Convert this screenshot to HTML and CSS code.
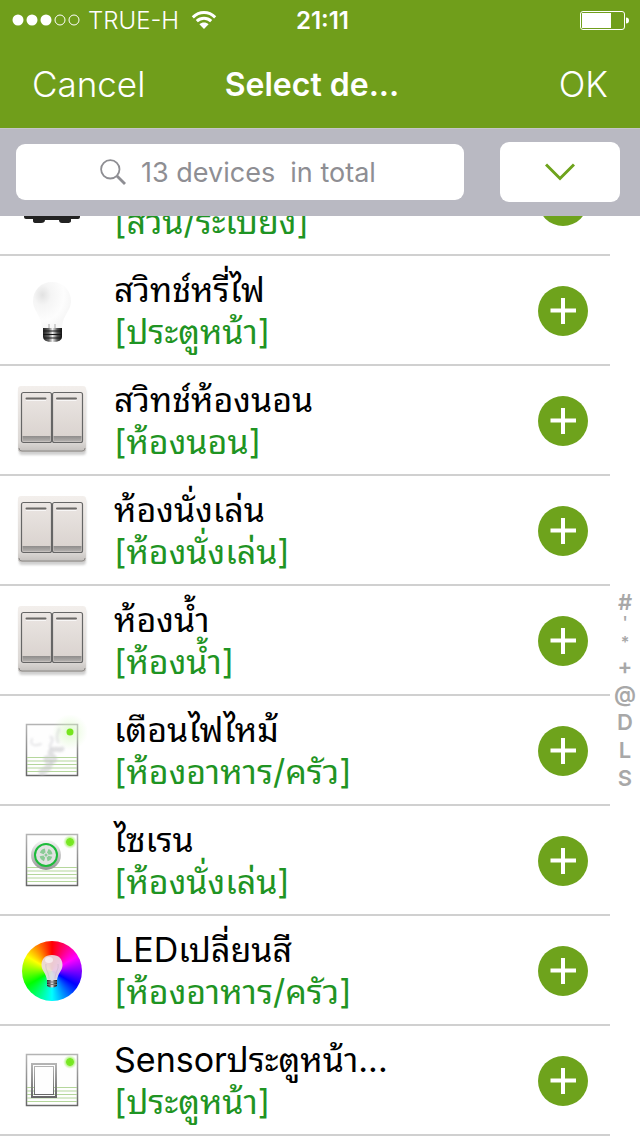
FILE: index.html
```
<!DOCTYPE html>
<html lang="th">
<head>
<meta charset="utf-8">
<meta name="viewport" content="width=device-width">
<title>Select devices</title>
<link rel="stylesheet" href="styles.css">
</head>
<body>
<svg class="defs" aria-hidden="true">
  <defs>
    <linearGradient id="plate" x1="0" y1="0" x2="0" y2="1"><stop offset="0" stop-color="#f3efec"/><stop offset=".85" stop-color="#dcd8d5"/><stop offset="1" stop-color="#c2bfbc"/></linearGradient>
    <linearGradient id="rocker" x1="0" y1="0" x2="0" y2="1"><stop offset="0" stop-color="#ebe6e3"/><stop offset="1" stop-color="#d8d1cd"/></linearGradient>
    <linearGradient id="lip" x1="0" y1="0" x2="0" y2="1"><stop offset="0" stop-color="#8e8c8b"/><stop offset="1" stop-color="#b3b0ae"/></linearGradient>
    <linearGradient id="frame" x1="0" y1="0" x2="0" y2="1"><stop offset="0" stop-color="#b4b4b4"/><stop offset="1" stop-color="#686868"/></linearGradient>
    <linearGradient id="metal" x1="0" y1="0" x2="1" y2="0"><stop offset="0" stop-color="#222"/><stop offset=".3" stop-color="#666"/><stop offset=".5" stop-color="#eee"/><stop offset=".75" stop-color="#555"/><stop offset="1" stop-color="#111"/></linearGradient>
    <linearGradient id="dome" x1="0" y1="0" x2="0" y2="1"><stop offset="0" stop-color="#f6f6f6"/><stop offset="1" stop-color="#969696"/></linearGradient>
    <radialGradient id="glass" cx=".25" cy=".28" r=".75"><stop offset="0" stop-color="#e2e2e2"/><stop offset=".3" stop-color="#f5f5f5"/><stop offset=".75" stop-color="#fdfdfd"/><stop offset="1" stop-color="#f7f7f7"/></radialGradient>
    <radialGradient id="glow"><stop offset="0" stop-color="#74e61c"/><stop offset=".5" stop-color="#7ae827"/><stop offset=".62" stop-color="#a5f06c" stop-opacity=".7"/><stop offset="1" stop-color="#c6f5a0" stop-opacity="0"/></radialGradient>
    <radialGradient id="haze"><stop offset="0" stop-color="#c9f5ae" stop-opacity=".6"/><stop offset="1" stop-color="#d8f8c4" stop-opacity="0"/></radialGradient>
    <filter id="soft"><feGaussianBlur stdDeviation="1.2"/></filter>
    <symbol id="plus" viewBox="0 0 50 50"><circle cx="25" cy="25" r="25" fill="#6ea31c"/><path d="M12.500 24.500H38M25 12V38" stroke="#fff" stroke-width="4"/></symbol>
    <symbol id="switch" viewBox="0 0 72 72">
      <rect x="3" y="4" width="67" height="66" rx="3" fill="#aaa" opacity=".55" filter="url(#soft)"/>
      <rect x="2" y="1" width="68" height="66" rx="3" fill="url(#plate)"/>
      <path d="M3 63Q3 66 6 66H66Q69 66 69 63" fill="none" stroke="#8d8a88"/>
      <rect x="5.500" y="7.500" width="30" height="50" rx="2" fill="url(#rocker)" stroke="#666" stroke-width="1.200"/>
      <rect x="36.500" y="7.500" width="30" height="50" rx="2" fill="url(#rocker)" stroke="#666" stroke-width="1.200"/>
      <path d="M6.500 51H34.500V56.500H6.500ZM37.500 51H65.500V56.500H37.500Z" fill="url(#lip)"/>
      <path d="M10.500 13.500H29.500M41 13.500H60" stroke="#6b6967" stroke-width="2" stroke-linecap="round"/>
      <path d="M10 15.500H30M40.500 15.500H60.500" stroke="#fff" stroke-opacity=".7"/>
    </symbol>
    <symbol id="panel" viewBox="0 0 72 72">
      <rect x="10.500" y="9.500" width="51" height="51" fill="#fefefe" stroke="url(#frame)" stroke-width="1.500"/>
      <path d="M11 42.500H61M11 46H61M11 49.500H61M11 53H61M11 56.500H61" stroke="#b4d69b" stroke-width="1"/>
    </symbol>
  </defs>
</svg>

<header class="top">
  <div class="status">
    <div class="carrier">
      <svg class="signal" viewBox="0 0 68 12"><g fill="#fff"><circle cx="6" cy="6" r="5.500"/><circle cx="20" cy="6" r="5.500"/><circle cx="34" cy="6" r="5.500"/></g><g fill="none" stroke="#fff"><circle cx="48" cy="6" r="5"/><circle cx="62" cy="6" r="5"/></g></svg>
      <span>TRUE-H</span>
      <svg class="wifi" viewBox="0 0 26 18"><g fill="none" stroke="#fff" stroke-width="3"><path d="M1.800 6.300C8.300 0 17.700 0 24.200 6.300"/><path d="M5.800 10.200C10 6.300 16 6.300 20.200 10.200"/></g><path d="M8.400 13.200C11 10.800 15 10.800 17.600 13.200L13 18Z" fill="#fff"/></svg>
    </div>
    <time class="clock">21:11</time>
    <svg class="battery" viewBox="0 0 50 20"><rect x="1.500" y="1.500" width="44" height="18" rx="2.500" fill="none" stroke="#fff"/><path d="M3 3H32V18H3Z" fill="#fff"/><path d="M47 7.500Q50 7.500 50 10.500T47 13.500Z" fill="#fff"/></svg>
  </div>
  <nav class="bar">
    <button class="bar-button" type="button">Cancel</button>
    <h1 class="bar-title">Select de...</h1>
    <button class="bar-button bar-ok" type="button">OK</button>
  </nav>
  <div class="tools">
    <label class="search">
      <svg class="search-icon" viewBox="0 0 26 26"><circle cx="10.300" cy="10.300" r="9.200" fill="none" stroke="#8e8e93" stroke-width="1.800"/><path d="M17 17L25 25" stroke="#8e8e93" stroke-width="2.800"/></svg>
      <input class="search-input" type="text" aria-label="Search devices" placeholder="13 devices  in total">
    </label>
    <button class="filter" type="button" aria-label="Expand"><svg class="chevron" viewBox="0 0 30 18"><path d="M1 1.500L15 15.500L29 1.500" fill="none" stroke="#6ea31c" stroke-width="3"/></svg></button>
  </div>
</header>

<main class="content">
  <ul class="devices">
    <li class="device">
      <svg class="icon" viewBox="0 0 72 72"><path d="M8 20H64V52Q64 54 62 54H55V56Q55 58 51 58H46Q43 58 43 55H29Q29 58 25 58H20Q17 58 17 56V54H10Q8 54 8 52Z" fill="#222"/></svg>
      <div class="text"><div class="name">สวิทช์</div><div class="room">[สวน/ระเบียง]</div></div>
      <button class="add" type="button" aria-label="Add"><svg viewBox="0 0 50 50"><use href="#plus"/></svg></button>
    </li>
    <li class="device">
      <svg class="icon" viewBox="0 0 72 72"><path d="M36 7C25 7 17 15 17 26C17 36 25 39 26 53H46C47 39 55 36 55 26C55 15 47 7 36 7Z" fill="url(#glass)"/><path d="M33 49V53M39 49V53" stroke="#aaa"/><path d="M27 53H46V62Q46 67 36.500 67T27 62Z" fill="url(#metal)"/><path d="M27 56H46M27 59.500H46M28 63H45" stroke="#161616" stroke-width="1.200"/></svg>
      <div class="text"><div class="name">สวิทช์หรี่ไฟ</div><div class="room">[ประตูหน้า]</div></div>
      <button class="add" type="button" aria-label="Add"><svg viewBox="0 0 50 50"><use href="#plus"/></svg></button>
    </li>
    <li class="device">
      <svg class="icon" viewBox="0 0 72 72"><use href="#switch"/></svg>
      <div class="text"><div class="name">สวิทช์ห้องนอน</div><div class="room">[ห้องนอน]</div></div>
      <button class="add" type="button" aria-label="Add"><svg viewBox="0 0 50 50"><use href="#plus"/></svg></button>
    </li>
    <li class="device">
      <svg class="icon" viewBox="0 0 72 72"><use href="#switch"/></svg>
      <div class="text"><div class="name">ห้องนั่งเล่น</div><div class="room">[ห้องนั่งเล่น]</div></div>
      <button class="add" type="button" aria-label="Add"><svg viewBox="0 0 50 50"><use href="#plus"/></svg></button>
    </li>
    <li class="device">
      <svg class="icon" viewBox="0 0 72 72"><use href="#switch"/></svg>
      <div class="text"><div class="name">ห้องน้ำ</div><div class="room">[ห้องน้ำ]</div></div>
      <button class="add" type="button" aria-label="Add"><svg viewBox="0 0 50 50"><use href="#plus"/></svg></button>
    </li>
    <li class="device">
      <svg class="icon" viewBox="0 0 72 72"><use href="#panel"/><circle cx="54" cy="17" r="18" fill="url(#haze)"/><g fill="none" stroke="#c4c4c8" stroke-linecap="round" filter="url(#soft)"><path d="M26 57C32 54 36 50 31 44" stroke-width="7" opacity=".5"/><path d="M36 47C45 42 29 40 36 35C41 33 45 36 46 34" stroke-width="5" opacity=".5"/><path d="M35 33C31 30 40 26 35 22M42 27C39 20 43 17 43 14" stroke-width="3" opacity=".35"/><path d="M16 24C13 31 20 31 25 29" stroke-width="2" opacity=".4"/></g><circle cx="54" cy="17" r="3.500" fill="#76e51e"/></svg>
      <div class="text"><div class="name">เตือนไฟไหม้</div><div class="room">[ห้องอาหาร/ครัว]</div></div>
      <button class="add" type="button" aria-label="Add"><svg viewBox="0 0 50 50"><use href="#plus"/></svg></button>
    </li>
    <li class="device">
      <svg class="icon" viewBox="0 0 72 72"><use href="#panel"/><circle cx="54" cy="17" r="7" fill="url(#glow)"/><circle cx="30" cy="30" r="15" fill="url(#dome)"/><circle cx="30" cy="30" r="11" fill="#e2e2e2" stroke="#1dbb3b" stroke-width="2"/><circle cx="30" cy="30" r="4.500" fill="none" stroke="#8acb96" stroke-width="4" stroke-dasharray="4.500 2.570" transform="rotate(16 30 30)"/><circle cx="30" cy="30" r="1.500" fill="#8acb96"/></svg>
      <div class="text"><div class="name">ไซเรน</div><div class="room">[ห้องนั่งเล่น]</div></div>
      <button class="add" type="button" aria-label="Add"><svg viewBox="0 0 50 50"><use href="#plus"/></svg></button>
    </li>
    <li class="device">
      <div class="icon wheel"><svg viewBox="0 0 60 60"><path d="M30 14C23 14 19.500 18 19.500 24C19.500 30 24.500 32 25 40H35C35.500 32 40.500 30 40.500 24C40.500 18 37 14 30 14Z" fill="#eadbe2" fill-opacity=".92"/><path d="M27 38C27 31 23 29 24 23M33 38C33 31 37 29 36 23" fill="none" stroke="#cab8c6" stroke-opacity=".6"/><ellipse cx="27" cy="19" rx="4" ry="3" fill="#fff" opacity=".6"/><path d="M25 39H35V45Q30 48 25 45Z" fill="url(#metal)"/><path d="M25 41H35M25 43.500H35" stroke="#777"/></svg></div>
      <div class="text"><div class="name">LEDเปลี่ยนสี</div><div class="room">[ห้องอาหาร/ครัว]</div></div>
      <button class="add" type="button" aria-label="Add"><svg viewBox="0 0 50 50"><use href="#plus"/></svg></button>
    </li>
    <li class="device">
      <svg class="icon" viewBox="0 0 72 72"><use href="#panel"/><circle cx="54" cy="17" r="7" fill="url(#glow)"/><rect x="16" y="19" width="24" height="33" fill="none" stroke="url(#frame)" stroke-width="2"/><rect x="18.500" y="21.500" width="19" height="28" fill="#fefefe" stroke="url(#frame)"/></svg>
      <div class="text"><div class="name">Sensorประตูหน้า...</div><div class="room">[ประตูหน้า]</div></div>
      <button class="add" type="button" aria-label="Add"><svg viewBox="0 0 50 50"><use href="#plus"/></svg></button>
    </li>
  </ul>
  <nav class="index" aria-label="Section index">
    <a class="key tight" href="#">#</a><a class="key tight mark" href="#">'</a><a class="key tight mark" href="#">*</a><a class="key" href="#">+</a><a class="key" href="#">@</a><a class="key" href="#">D</a><a class="key" href="#">L</a><a class="key" href="#">S</a>
  </nav>
</main>
</body>
</html>
```

FILE: styles.css
```
* { box-sizing: border-box; }
body { margin: 0; background: #fff; font-family: Inter, "Noto Sans Thai Looped", Loma, Garuda, Waree, "Noto Sans Thai", "Noto Sans", sans-serif; }
button { padding: 0; border: 0; background: none; font: inherit; color: inherit; cursor: pointer; }
svg { display: block; }
.defs { position: absolute; width: 0; height: 0; }

.top { position: sticky; top: 0; z-index: 2; background: #709e1b; color: #fff; }
.status { display: grid; grid-template-columns: 1fr auto 1fr; align-items: center; height: 40px; padding: 0 11px 0 12px; font-size: 24px; }
.carrier { display: flex; align-items: center; gap: 8px; font-weight: 300; }
.signal { width: 68px; height: 12px; }
.wifi { width: 26px; height: 18px; margin-left: 4px; }
.clock { padding-left: 4px; font-size: 24px; font-weight: 600; }
.battery { width: 50px; height: 20px; justify-self: end; }

.bar { display: grid; grid-template-columns: 1fr auto 1fr; align-items: center; height: 88px; padding: 0 32px; }
.bar-button { justify-self: start; font-size: 35px; font-weight: 300; }
.bar-ok { justify-self: end; }
.bar-title { margin: 0; padding-right: 16px; font-size: 32px; font-weight: 600; }

.tools { display: flex; align-items: center; gap: 36px; height: 88px; padding: 0 20px 1px 16px; border-top: 1px solid #c6c6c8; background: #b9b9c2; }
.search { flex: 1; min-width: 0; display: flex; align-items: center; gap: 15px; height: 56px; padding-left: 84px; border-radius: 9px; background: #fff; }
.search-icon { flex: none; width: 26px; height: 26px; }
.search-input { flex: 1; width: 100%; min-width: 0; padding: 0; border: 0; outline: 0; background: none; font: 400 27px Inter, sans-serif; }
.search-input::placeholder { color: #8e8e93; opacity: 1; }
.filter { flex: none; display: grid; place-items: center; width: 120px; height: 60px; border-radius: 9px; background: #fff; }
.chevron { width: 30px; height: 18px; }

.content { display: flex; margin-top: -70px; }
.devices { flex: 1; min-width: 0; margin: 0; padding: 0; list-style: none; }
.device { display: flex; align-items: center; height: 110px; padding: 2px 22px 0 16px; border-bottom: 2px solid #d0d0d0; }
.icon { flex: none; width: 72px; height: 72px; }
.wheel { padding: 6px; }
.wheel svg { width: 60px; height: 60px; border-radius: 50%; background: conic-gradient(#f00, #f0f 60deg, #00f 120deg, #0ff 180deg, #0f0 240deg, #ff0 300deg, #f00); }
.text { flex: 1; min-width: 0; margin-left: 26px; font-size: 34px; line-height: 42px; white-space: nowrap; }
.name { color: #000; }
.room { color: #1f9423; }
.add { width: 50px; height: 50px; }

.index { display: flex; flex-direction: column; justify-content: center; width: 30px; padding-top: 102px; font-size: 22px; font-weight: 600; text-align: center; }
.key { color: #a8a8a8; line-height: 28px; text-decoration: none; }
.tight { line-height: 20px; }
.mark { font-size: 16px; }
```
